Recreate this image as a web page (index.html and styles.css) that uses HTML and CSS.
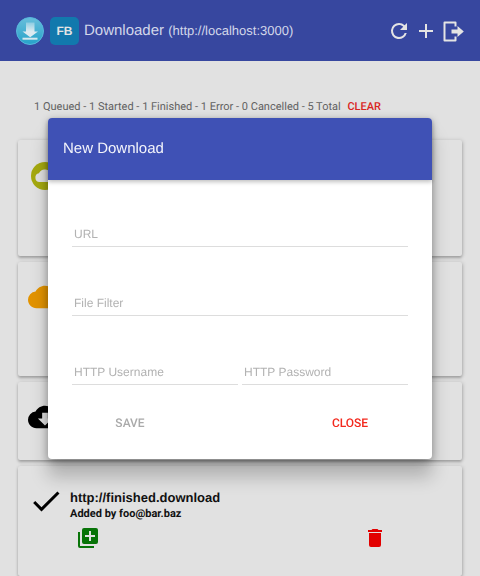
FILE: index.html
```html
<!DOCTYPE html>
<html lang="en">
<head>
<meta charset="utf-8">
<meta name="viewport" content="width=device-width, initial-scale=1">
<title>Downloader</title>
<link rel="stylesheet" href="styles.css">
</head>
<body>
<div class="app">
  <header class="topbar">
    <svg class="logo" viewBox="0 0 28 28" aria-hidden="true">
      <defs>
        <linearGradient id="disc" x1="0" y1="0" x2="0" y2="1"><stop offset="0" stop-color="#68bedb"/><stop offset="1" stop-color="#26a3c9"/></linearGradient>
        <linearGradient id="arrow" x1="0" y1="0" x2="0" y2="1"><stop offset="0" stop-color="#8dcde2"/><stop offset="0.6" stop-color="#dceaf0"/></linearGradient>
      </defs>
      <circle cx="14" cy="14" r="13.5" fill="url(#disc)" stroke="#58b7dc"/>
      <path d="M10 5.500h8.500v9H22L14.200 20.200 6.500 14.500H10z" fill="url(#arrow)"/>
      <path d="M6.500 20.700h15v2h-15z" fill="#d5e8ee"/>
    </svg>
    <span class="badge">FB</span>
    <h1 class="title">Downloader <span class="host">(http://localhost:3000)</span></h1>
    <nav class="actions">
      <button type="button" class="icon-button" aria-label="Refresh"><svg viewBox="0 0 24 24"><path d="M17.65 6.35A7.96 7.96 0 0 0 12 4a8 8 0 1 0 7.73 10h-2.08A6 6 0 1 1 12 6c1.66 0 3.14.69 4.22 1.78L13 11h7V4z"/></svg></button>
      <button type="button" class="icon-button" aria-label="Add"><svg viewBox="0 0 24 24"><path d="M19 13h-6v6h-2v-6H5v-2h6V5h2v6h6z"/></svg></button>
      <button type="button" class="icon-button" aria-label="Log out"><svg viewBox="0 0 24 24"><path d="M14.500 7.500V3.500H3.500v18h11v-4" fill="none" stroke="currentColor" stroke-width="2" stroke-linejoin="round"/><path d="M10.500 10.500h6V7l6.300 5.500-6.300 5.500v-3.500h-6z"/></svg></button>
    </nav>
  </header>
  <main class="content">
    <p class="stats">1 Queued - 1 Started - 1 Finished - 1 Error - 0 Cancelled - 5 Total <button type="button" class="clear">CLEAR</button></p>
    <section class="card card-tall">
      <svg class="status queued" viewBox="0 0 28 28"><circle cx="14" cy="14" r="14"/><path class="cutout" d="M8.500 20a4.400 4.400 0 0 1-.6-8.700A6.600 6.600 0 0 1 20.300 12.500a3.800 3.800 0 0 1 0 7.500z"/></svg>
    </section>
    <section class="card card-medium">
      <svg class="status started" viewBox="0 0 24 24"><path d="M19.350 10.040A7.490 7.490 0 0 0 12 4C9.110 4 6.600 5.640 5.350 8.040A5.994 5.994 0 0 0 0 14c0 3.310 2.690 6 6 6h13a5 5 0 0 0 .35-9.960z"/></svg>
    </section>
    <section class="card card-short">
      <svg class="status loading" viewBox="0 0 24 24"><path d="M19.350 10.040A7.490 7.490 0 0 0 12 4C9.110 4 6.600 5.640 5.350 8.040A5.994 5.994 0 0 0 0 14c0 3.310 2.690 6 6 6h13a5 5 0 0 0 .35-9.960zM17 13l-5 5-5-5h3V9h4v4z"/></svg>
    </section>
    <section class="card card-finished">
      <svg class="status finished" viewBox="0 0 24 24"><path d="M9 16.170 4.830 12l-1.420 1.410L9 19 21 7l-1.410-1.410z"/></svg>
      <div class="details">
        <h2 class="name">http://finished.download</h2>
        <p class="author">Added by foo@bar.baz</p>
        <div class="tools">
          <button type="button" class="icon-button add" aria-label="Add to library"><svg viewBox="0 0 24 24"><path d="M4 6H2v14a2 2 0 0 0 2 2h14v-2H4zM20 2H8a2 2 0 0 0-2 2v12a2 2 0 0 0 2 2h12a2 2 0 0 0 2-2V4a2 2 0 0 0-2-2zm-1 9h-4v4h-2v-4H9V9h4V5h2v4h4z"/></svg></button>
          <button type="button" class="icon-button remove" aria-label="Delete"><svg viewBox="0 0 24 24"><path d="M6 19a2 2 0 0 0 2 2h8a2 2 0 0 0 2-2V7H6zM19 4h-3.500l-1-1h-5l-1 1H5v2h14z"/></svg></button>
        </div>
      </div>
    </section>
  </main>
</div>
<div class="overlay">
  <form class="dialog" role="dialog" aria-labelledby="dialog-title">
    <h2 class="dialog-title" id="dialog-title">New Download</h2>
    <div class="fields">
      <input class="field wide" type="text" placeholder="URL" aria-label="URL">
      <input class="field wide" type="text" placeholder="File Filter" aria-label="File Filter">
      <input class="field" type="text" placeholder="HTTP Username" aria-label="HTTP Username">
      <input class="field" type="password" placeholder="HTTP Password" aria-label="HTTP Password">
    </div>
    <div class="buttons">
      <button type="button" class="save" disabled>SAVE</button>
      <button type="button" class="close">CLOSE</button>
    </div>
  </form>
</div>
</body>
</html>
```
FILE: styles.css
```css
* {
  box-sizing: border-box;
}

body,
h1,
h2,
p {
  margin: 0;
}

body {
  background: #e1e1e1;
  color: #111;
  font-family: "Liberation Sans", Arial, sans-serif;
  text-rendering: geometricPrecision;
}

button {
  padding: 0;
  border: 0;
  background: none;
  color: inherit;
  font: inherit;
  text-rendering: inherit;
}

svg {
  display: block;
  fill: currentColor;
}

.app {
  display: flex;
  flex-direction: column;
  min-height: 100vh;
}

.topbar {
  display: flex;
  align-items: center;
  height: 61px;
  padding: 0 15px 0 16px;
  background: #37479f;
  color: #e4e4e4;
}

.logo {
  width: 28px;
  height: 28px;
}

.badge {
  display: grid;
  place-items: center;
  width: 29px;
  height: 28px;
  margin: 0 5px 0 6px;
  border-radius: 5px;
  background: #1279ad;
  font-size: 12px;
  font-weight: bold;
}

.title {
  font-size: 15px;
  font-weight: normal;
  line-height: 20px;
  color: #d3d7ea;
  white-space: nowrap;
}

.host {
  font-size: 13px;
}

.actions {
  display: flex;
  gap: 3px;
  margin-left: auto;
}

.icon-button {
  width: 24px;
  height: 24px;
}

.content {
  display: flex;
  flex: 1;
  flex-direction: column;
  gap: 6px;
  padding: 38px 18px 0;
}

.stats {
  height: 35px;
  padding-left: 16px;
  font-family: Roboto, "Liberation Sans", sans-serif;
  font-size: 11px;
  line-height: 16px;
  color: #626262;
  white-space: nowrap;
}

.clear {
  margin-left: 4px;
  color: #d9251d;
  font-weight: 500;
}

.card {
  display: flex;
  padding: 22px 13px 0;
  border-radius: 2px;
  background: #e1e1e1;
  box-shadow: 0 2px 3px rgba(0, 0, 0, 0.26), 1px 0 4px rgba(0, 0, 0, 0.12);
}

.card-tall {
  height: 116px;
}

.card-medium {
  height: 114px;
  padding: 18px 10px 0;
}

.card-short {
  height: 78px;
  padding: 18px 10px 0;
}

.card-finished {
  flex: 1;
  padding: 17px 10px 0;
}

.status {
  flex: none;
  width: 34px;
  height: 34px;
}

.queued {
  width: 28px;
  height: 28px;
  color: #a5a90f;
}

.cutout {
  fill: #e1e1e1;
}

.started {
  color: #e29300;
}

.loading,
.finished {
  color: #000;
}

.finished {
  width: 36px;
  height: 36px;
}

.details {
  flex: 1;
  padding: 7px 0 0 6px;
}

.name {
  font-size: 13px;
  line-height: 16px;
}

.author {
  font-family: Roboto, "Liberation Sans", sans-serif;
  font-size: 11px;
  font-weight: bold;
  line-height: 16px;
}

.tools {
  display: flex;
  justify-content: space-between;
  padding: 4px 65px 0 6px;
}

.add {
  color: #087408;
}

.remove {
  color: #e20000;
}

.overlay {
  position: fixed;
  inset: 0;
  display: flex;
  align-items: center;
  justify-content: center;
}

.dialog {
  width: 80%;
  border-radius: 4px;
  background: #fff;
  box-shadow: 0 18px 18px rgba(0, 0, 0, 0.22), 0 2px 8px rgba(0, 0, 0, 0.3);
}

.dialog-title {
  padding: 0 15px;
  border-radius: 4px 4px 0 0;
  background: #3f51b5;
  box-shadow: 0 2px 4px rgba(0, 0, 0, 0.25);
  color: #f3f4fb;
  font-size: 15px;
  font-weight: normal;
  line-height: 62px;
}

.fields {
  display: grid;
  grid-template-columns: 1fr 1fr;
  gap: 45px 4px;
  padding: 43px 24px 0;
}

.field {
  width: 100%;
  min-width: 0;
  height: 24px;
  padding: 0 2px;
  border: 0;
  border-bottom: 1px solid #ddd;
  background: none;
  color: #333;
  font: 12px "Liberation Sans", Arial, sans-serif;
  text-rendering: inherit;
}

.field::placeholder {
  color: #b2b2b2;
  opacity: 1;
}

.wide {
  grid-column: 1 / -1;
}

.buttons {
  display: grid;
  grid-template-columns: 1fr 1fr;
  justify-items: center;
  padding: 30px 0 28px;
  font-family: Roboto, "Liberation Sans", sans-serif;
  font-size: 12px;
  font-weight: 500;
  line-height: 16px;
}

.save {
  margin-right: 28px;
  color: #aaa;
}

.close {
  margin-left: 28px;
  color: #f3291e;
}
```
